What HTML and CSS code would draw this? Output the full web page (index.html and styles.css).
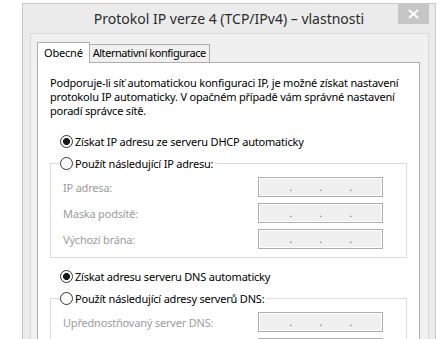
FILE: index.html
```html
<!DOCTYPE html>
<html lang="cs">
<head>
    <meta charset="UTF-8">
    <title>Protokol IP verze 4 (TCP/IPv4) – vlastnosti</title>
    <link rel="stylesheet" href="styles.css">
</head>
<body>

    <div class="window">
        <div class="titlebar">
            <span></span>
            <h1 class="title">Protokol IP verze 4 (TCP/IPv4) – vlastnosti</h1>
            <button class="close" aria-label="Zavřít">
                <svg width="11" height="10" viewBox="0 0 11 10">
                    <path d="M1 1 L10 9 M10 1 L1 9" stroke="#fff" stroke-width="2"/>
                </svg>
            </button>
        </div>

        <div class="panel">
            <div class="tabs">
                <div class="tab active">Obecné</div>
                <div class="tab">Alternativní konfigurace</div>
            </div>

            <div class="page">
                <p class="intro">Podporuje-li síť automatickou konfiguraci IP, je možné získat nastavení<br>protokolu IP automaticky. V opačném případě vám správné nastavení<br>poradí správce sítě.</p>

                <label class="option first"><input type="radio" name="ip" checked>Získat IP adresu ze serveru DHCP automaticky</label>

                <fieldset class="group">
                    <legend><label class="option"><input type="radio" name="ip">Použít následující IP adresu:</label></legend>
                    <div class="field">
                        <span>IP adresa:</span>
                        <div class="ip"><span>.</span><span>.</span><span>.</span></div>
                    </div>
                    <div class="field">
                        <span>Maska podsítě:</span>
                        <div class="ip"><span>.</span><span>.</span><span>.</span></div>
                    </div>
                    <div class="field">
                        <span>Výchozí brána:</span>
                        <div class="ip"><span>.</span><span>.</span><span>.</span></div>
                    </div>
                </fieldset>

                <label class="option dns"><input type="radio" name="dns" checked>Získat adresu serveru DNS automaticky</label>

                <fieldset class="group">
                    <legend><label class="option"><input type="radio" name="dns">Použít následující adresy serverů DNS:</label></legend>
                    <div class="field">
                        <span>Upřednostňovaný server DNS:</span>
                        <div class="ip"><span>.</span><span>.</span><span>.</span></div>
                    </div>
                    <div class="field">
                        <span>Náhradní server DNS:</span>
                        <div class="ip"><span>.</span><span>.</span><span>.</span></div>
                    </div>
                </fieldset>
            </div>
        </div>
    </div>

</body>
</html>
```

FILE: styles.css
```css
* {
    margin: 0;
    padding: 0;
    box-sizing: border-box;
}

body {
    background: #fff;
    font-family: "Noto Sans", "Open Sans", sans-serif;
    font-size: 11px;
    letter-spacing: -0.2px;
    color: #000;
    overflow: hidden;
    height: 339px;
}

.window {
    margin: 3px 0 0 22px;
    width: 414px;
    height: 345px;
    background: #ebebeb;
    border: 1px solid #c8c8c8;
    overflow: hidden;
}

.titlebar {
    display: grid;
    grid-template-columns: 1fr auto 1fr;
    align-items: start;
    height: 29px;
}

.title {
    font-weight: normal;
    font-size: 14px;
    letter-spacing: 0;
    color: #2b2b2b;
    line-height: 30px;
    white-space: nowrap;
}

.close {
    justify-self: end;
    width: 31px;
    height: 20px;
    margin-right: 6px;
    border: none;
    background: #c6c6c6;
    display: flex;
    align-items: center;
    justify-content: center;
}

.panel {
    margin: 0 6px 0 7px;
    height: 320px;
    background: #f0f0f0;
    border: 1px solid #dadada;
    padding: 7px 8px 0 6px;
}

.tabs {
    display: flex;
    align-items: flex-end;
    height: 21px;
}

.tab {
    height: 18px;
    padding: 0 3px;
    border: 1px solid #adadad;
    border-bottom: none;
    margin-left: -1px;
    line-height: 16px;
    letter-spacing: -0.45px;
    white-space: nowrap;
    background: #f0f0f0;
}

.tab.active {
    position: relative;
    z-index: 1;
    height: 21px;
    margin: 0 0 -1px 0;
    padding: 0 6px;
    line-height: 20px;
    letter-spacing: -0.2px;
    background: #fff;
}

.page {
    background: #fff;
    border: 1px solid #adadad;
    height: 300px;
    padding: 13px 12px 0 12px;
}

.intro {
    line-height: 14px;
    white-space: nowrap;
}

.option {
    display: flex;
    align-items: center;
    gap: 2px;
    height: 15px;
    white-space: nowrap;
}

.option input {
    appearance: none;
    width: 13px;
    height: 13px;
    border: 1px solid #333;
    border-radius: 50%;
    background: #fff;
    flex: none;
}

.option input:checked {
    background: radial-gradient(circle, #1a1a1a 0 3.2px, #fff 3.8px);
}

.option.first {
    margin: 16px 0 0 10px;
}

.option.dns {
    margin: 11px 0 0 10px;
}

.group {
    margin-top: 7px;
    border: 1px solid #dcdcdc;
    padding: 6px 0 8px 0;
    display: flex;
    flex-direction: column;
    gap: 6px;
}

.group legend {
    margin-left: 9px;
    padding-right: 2px;
}

.field {
    display: flex;
    align-items: center;
    justify-content: space-between;
    padding: 0 23px 0 12px;
    color: #9b9b9b;
}

.ip {
    width: 125px;
    height: 20px;
    border: 1px solid #adadad;
    box-shadow: inset 0 0 0 1px #fff;
    background: #f0f0f0;
    display: flex;
    justify-content: center;
    line-height: 17px;
    color: #777;
}

.ip span {
    width: 30px;
    text-align: center;
}
```
